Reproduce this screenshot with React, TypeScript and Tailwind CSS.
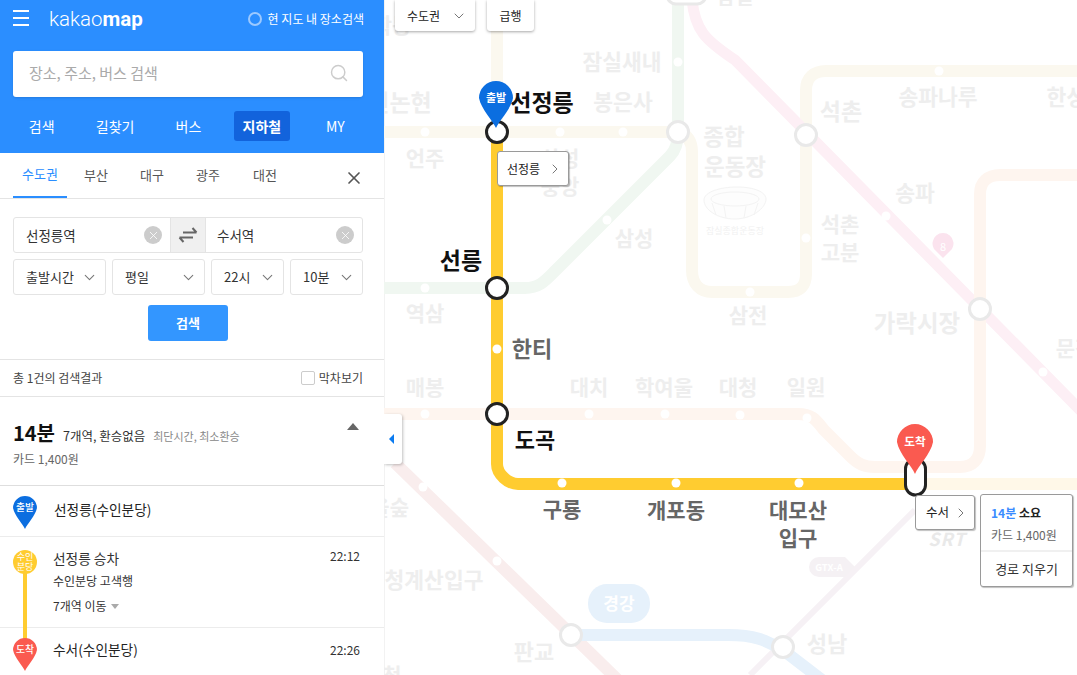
import React from "react";
import { ChevronDown, ChevronRight, Search, X } from "lucide-react";

const FONT = "'Noto Sans CJK KR', 'Noto Sans', sans-serif";

// faint station names: [text, x, y, size]
const fadedLabels: [string, number, number, number][] = [
  ["학동", 392, 33, 21],
  ["잠실새내", 622, 70, 21.5],
  ["신논현", 400, 111, 23],
  ["봉은사", 623, 110, 21.5],
  ["언주", 425, 166, 21],
  ["삼성", 560, 166, 21],
  ["중앙", 560, 194, 21],
  ["종합", 724, 145, 22.5],
  ["운동장", 735, 175, 22.5],
  ["삼성", 634, 246, 21],
  ["역삼", 425, 321, 21],
  ["석촌", 841, 120, 23],
  ["송파나루", 938, 105, 21.5],
  ["한성백제", 1086, 105, 21.5],
  ["송파", 915, 201, 21.5],
  ["석촌", 840, 232, 21],
  ["고분", 840, 260, 21],
  ["삼전", 748, 323, 21],
  ["가락시장", 917, 332, 23.5],
  ["문정", 1075, 356, 21],
  ["매봉", 425, 395, 21],
  ["대치", 589, 395, 21],
  ["학여울", 664, 395, 21],
  ["대청", 738, 395, 21],
  ["일원", 806, 395, 21],
  ["서울숲", 380, 515, 21],
  ["청계산입구", 434, 588, 21.5],
  ["판교", 534, 660, 22],
  ["성남", 827, 652, 22],
  ["청", 392, 683, 21],
];

// the route's own station names
const routeLabels: [string, number, number, number, string][] = [
  ["선정릉", 542, 111, 23, "#111111"],
  ["선릉", 461, 269, 23, "#111111"],
  ["한티", 532, 357, 22, "#666666"],
  ["도곡", 535, 448, 22, "#111111"],
  ["구룡", 562, 517, 21, "#666666"],
  ["개포동", 676, 518, 21, "#666666"],
  ["대모산", 798, 518, 21, "#666666"],
  ["입구", 798, 546, 21, "#666666"],
];

const fadedDots: [number, number][] = [
  [425, 132], [560, 132], [623, 132], [678, 62], [607, 220], [425, 288],
  [806, 238], [750, 292], [939, 71], [886, 216], [1043, 372], [425, 414],
  [589, 414], [665, 414], [740, 415], [807, 418], [423, 487], [497, 561],
];

const routeDots: [number, number][] = [[497, 349], [562, 483], [676, 483], [799, 483]];

const PIN_PATH = "M0 32 C-3 25 -15 13 -17 2 A17 17 0 1 1 17 2 C15 13 3 25 0 32Z";

const MapPin = ({ x, y, scale, fill, label }: { x: number; y: number; scale: number; fill: string; label: string }) => (
  <g transform={`translate(${x} ${y}) scale(${scale})`}>
    <path d={PIN_PATH} fill={fill} />
    <text y="6" textAnchor="middle" fontSize="11" fontWeight="700" fill="#fff">
      {label}
    </text>
  </g>
);

const SubwayMap = () => (
  <svg viewBox="384 0 693 675" className="w-[693px] h-[675px] block" style={{ fontFamily: FONT }}>
    <g fill="none" strokeWidth="12">
      <path d="M384 132H678M497 132V0M678 132C688 134 692 142 692 152V270C692 284 700 292 712 292H788C800 292 806 286 806 274V90C806 78 814 71 826 71H1077" stroke="#fbf8ef" />
      <path d="M384 288H525C540 288 546 280 556 270L670 156C676 150 678 142 678 132V0" stroke="#f0f7f1" />
      <path d="M692 0C695 30 705 40 735 60L1090 420" stroke="#fdeff5" strokeWidth="11" />
      <path d="M384 414H798C812 414 816 420 824 430L850 456C858 464 864 467 875 467H960C972 467 980 460 980 446V194C980 182 988 175 1000 175H1077" stroke="#fef5ef" />
      <path d="M915 484H1077" stroke="#fff8e8" />
      <path d="M915 510L750 675" stroke="#f6f1f5" strokeWidth="6" />
      <path d="M395 463L618 680" stroke="#f9eded" />
      <path d="M571 635H728C755 635 765 640 783 650L822 680" stroke="#e6f1fb" />
      <path d="M497 132V464C497 474 508 484 518 484H915" stroke="#ffcc30" />
    </g>

    {/* stadium */}
    <g fill="#fdfdfd" stroke="#f3f3f3" strokeWidth="1">
      <path d="M704 200C704 192 720 187 737 187C754 187 766 192 766 199C766 208 752 219 735 219C718 219 704 210 704 200Z" />
      <ellipse cx="735" cy="199" rx="24" ry="7" />
      <path fill="none" d="M712 203L716 215M724 206L726 218M746 206L744 218M758 203L754 215" />
    </g>
    <text x="735" y="234" textAnchor="middle" fontSize="9" fill="#f1f1f1">잠실종합운동장</text>

    {fadedDots.map(([x, y], i) => (
      <circle key={i} cx={x} cy={y} r="4.5" fill="#fff" />
    ))}
    {routeDots.map(([x, y], i) => (
      <circle key={i} cx={x} cy={y} r="4.5" fill="#fff" />
    ))}

    {[[678, 132], [806, 135], [980, 309], [571, 635], [783, 647]].map(([x, y], i) => (
      <circle key={i} cx={x} cy={y} r="10.5" fill="#fff" stroke="#e9e9e9" strokeWidth="3" />
    ))}
    <rect x="667" y="-18" width="39" height="22" rx="9" fill="#fff" stroke="#e9e9e9" strokeWidth="3" />

    {fadedLabels.map(([t, x, y, s], i) => (
      <text key={i} x={x} y={y} fontSize={s} fontWeight="700" textAnchor="middle" fill="#eeeeee">
        {t}
      </text>
    ))}
    <text x="735" y="4" fontSize="20" fontWeight="700" textAnchor="middle" fill="#eeeeee">잠실</text>

    {/* line tags */}
    <path d="M943 258L934 249A10.500 10.500 0 1 1 952 249Z" fill="#fbe3ee" />
    <text x="943" y="251" fontSize="11" textAnchor="middle" fill="#fff">8</text>
    <rect x="588" y="584" width="62" height="39" rx="19" fill="#e6f1fb" />
    <text x="619" y="610" fontSize="17" fontWeight="700" textAnchor="middle" fill="#fff">경강</text>
    <path d="M819 557H845L855 567L845 577H819A10 10 0 0 1 819 557Z" fill="#f5f1f4" />
    <text x="829" y="571" fontSize="9.5" fontWeight="700" textAnchor="middle" fill="#fff">GTX-A</text>
    <text x="947" y="546" fontSize="18" fontWeight="700" fontStyle="italic" textAnchor="middle" fill="#e9e9e9" letterSpacing="1">SRT</text>

    {routeLabels.map(([t, x, y, s, c], i) => (
      <text key={i} x={x} y={y} fontSize={s} fontWeight="700" textAnchor="middle" fill={c}>
        {t}
      </text>
    ))}

    {[[497, 132], [497, 288], [497, 414]].map(([x, y], i) => (
      <circle key={i} cx={x} cy={y} r="10.500" fill="#fff" stroke="#222" strokeWidth="3" />
    ))}
    <rect x="905.500" y="459" width="20" height="36" rx="10" fill="#fff" stroke="#222" strokeWidth="3" />

    <MapPin x={496} y={96} scale={1} fill="#0b6ee0" label="출발" />
    <MapPin x={915} y={440} scale={1.06} fill="#fa5a50" label="도착" />
  </svg>
);

const Select = ({ label, className }: { label: string; className: string }) => (
  <div className={`${className} h-9 flex items-center justify-between pl-3 pr-[7px] border border-[#e4e4e4] rounded-[3px] text-[13px] text-[#333]`}>
    <span>{label}</span>
    <ChevronDown size={17} strokeWidth={1.5} className="text-[#777]" />
  </div>
);

const ClearButton = () => (
  <span className="w-[18px] h-[18px] rounded-full bg-[#cccccc] flex items-center justify-center">
    <X size={13} strokeWidth={1.5} className="text-white" />
  </span>
);

const SmallPin = ({ fill, label }: { fill: string; label: string }) => (
  <svg viewBox="-17 -15 34 47" className="w-6 h-[33px] absolute left-[13px]">
    <path d={PIN_PATH} fill={fill} />
    <text y="6.500" textAnchor="middle" fontSize="14" fontWeight="500" fill="#fff">
      {label}
    </text>
  </svg>
);

const Sidebar = () => (
  <aside className="relative z-10 w-[384px] h-[675px] shrink-0 bg-white overflow-hidden">
    <header className="h-[153px] bg-[#2b8eff]">
      <div className="h-[51px] flex items-start pt-[5px] pl-[13px] pr-5 text-white">
        <div className="w-[16px] mt-[5px] flex flex-col gap-[5px]">
          <span className="h-0.5 bg-white" />
          <span className="h-0.5 bg-white" />
          <span className="h-0.5 bg-white" />
        </div>
        <div className="ml-5 text-[20.500px] leading-[28px] font-['Roboto']">
          <span className="font-light">kakao</span>
          <span className="font-bold">map</span>
        </div>
        <div className="ml-auto mt-[6px] flex items-center gap-[6px] text-xs">
          <span className="w-[14px] h-[14px] rounded-full border-2 border-[#9cc9ff]" />
          현 지도 내 장소검색
        </div>
      </div>
      <div className="ml-[13px] w-[350px] h-[46px] bg-white rounded-[3px] shadow-sm flex items-center justify-between pl-4 pr-[14px] pb-0.5 text-[15px] text-[#aaaaaa]">
        장소, 주소, 버스 검색
        <Search size={20} strokeWidth={1.75} className="text-[#cccccc]" />
      </div>
      <nav className="mt-[14px] pl-[5px] pr-[12px] grid grid-cols-5 text-white text-sm">
        <span className="h-[30px] flex items-center justify-center">검색</span>
        <span className="h-[30px] flex items-center justify-center">길찾기</span>
        <span className="h-[30px] flex items-center justify-center">버스</span>
        <span className="h-[30px] flex items-center justify-center">
          <b className="w-14 h-[30px] flex items-center justify-center rounded-[3px] bg-[#1263dc] font-bold">지하철</b>
        </span>
        <span className="h-[30px] flex items-center justify-center">MY</span>
      </nav>
    </header>

    <div className="h-[46px] relative flex border-b border-[#e4e4e4] pl-[13px] text-[13px] text-[#555]">
      <span className="w-[54px] h-[45px] flex items-center justify-center pb-0.5 text-[#2b8eff] border-b-2 border-[#2b8eff]">수도권</span>
      <span className="ml-[13px] h-[43px] w-8 flex items-center justify-center">부산</span>
      <span className="ml-6 h-[43px] w-8 flex items-center justify-center">대구</span>
      <span className="ml-6 h-[43px] w-8 flex items-center justify-center">광주</span>
      <span className="ml-[25px] h-[43px] w-8 flex items-center justify-center">대전</span>
      <X size={20} strokeWidth={2} className="absolute left-[344px] top-[15px] text-[#555]" />
    </div>

    <div className="w-[350px] ml-[13px] pt-[18px]">
      <div className="h-9 flex border border-[#e4e4e4] rounded-[3px] text-[13.5px] text-[#333]">
        <div className="w-[156px] flex items-center justify-between pl-3 pr-2">
          선정릉역
          <ClearButton />
        </div>
        <div className="w-9 bg-[#f0f0f0] border-x border-[#e4e4e4] flex items-center justify-center">
          <svg viewBox="0 0 20 16" className="w-5 h-4" fill="none" stroke="#666" strokeWidth="2">
            <path d="M5 5.500H18.500M14.500 1L18.500 5.500M15 10.500H1.500M5.500 15L1.500 10.500" />
          </svg>
        </div>
        <div className="flex-1 flex items-center justify-between pl-[11px] pr-2">
          수서역
          <ClearButton />
        </div>
      </div>
      <div className="mt-[6px] flex gap-[6px]">
        <Select label="출발시간" className="w-[93px]" />
        <Select label="평일" className="w-[93px]" />
        <Select label="22시" className="w-[73px]" />
        <Select label="10분" className="w-[73px]" />
      </div>
      <div className="mt-[10px] mx-auto w-20 h-9 rounded-[3px] bg-[#3396ff] flex items-center justify-center text-[13px] font-bold text-white">검색</div>
    </div>

    <div className="mt-[18px] h-[38px] border-y border-[#e4e4e4] flex items-center justify-between pl-[13px] pr-[21px] text-xs text-[#444]">
      총 1건의 검색결과
      <label className="flex items-center gap-1">
        <span className="w-[14px] h-[14px] border border-[#cccccc] rounded-[2px]" />
        막차보기
      </label>
    </div>

    <div className="h-[89px] relative border-b border-[#dedede] px-[13px] pt-[23px]">
      <div className="flex items-baseline h-[26px]">
        <b className="text-xl leading-[26px] font-bold text-[#111]">14분</b>
        <span className="ml-2 text-[12.500px] text-[#333]">7개역, 환승없음</span>
        <span className="ml-2 text-[11px] text-[#888]">최단시간, 최소환승</span>
      </div>
      <div className="mt-[5px] text-xs text-[#666]">카드 1,400원</div>
      <span className="absolute left-[347px] top-[26px] w-0 h-0 border-x-[6px] border-x-transparent border-b-[7px] border-b-[#666]" />
    </div>

    <div className="relative h-[51px] border-b border-[#ececec] flex items-center pb-1 pl-[54px] text-[13.700px] text-[#222]">
      <div className="absolute left-0 top-[10px]"><SmallPin fill="#0b6ee0" label="출발" /></div>
      선정릉(수인분당)
    </div>

    <div className="relative h-[91px] border-b border-[#ececec] pl-[53px] pr-6 pt-[11px] text-[#333]">
      <span className="absolute left-[23px] top-[36px] w-1 h-[72px] bg-[#ffcc30] z-10" />
      <span className="absolute left-[13px] top-[13px] w-6 h-6 rounded-full bg-[#ffcc30] text-white text-[9px] leading-[10px] flex items-center justify-center text-center z-10">
        수인
        <br />
        분당
      </span>
      <div className="flex justify-between text-[13.700px] leading-5">
        <span>선정릉 승차</span>
        <span className="text-xs">22:12</span>
      </div>
      <div className="mt-[3px] text-xs leading-5">수인분당 고색행</div>
      <div className="mt-[5px] text-xs leading-5 flex items-center gap-1">
        7개역 이동
        <span className="w-0 h-0 border-x-4 border-x-transparent border-t-[5px] border-t-[#aaaaaa]" />
      </div>
    </div>

    <div className="relative h-[47px] flex items-center justify-between pl-[53px] pr-6 pb-1 text-[13.700px] text-[#222]">
      <div className="absolute left-0 top-[10px] z-20"><SmallPin fill="#fa5a50" label="도착" /></div>
      수서(수인분당)
      <span className="text-xs text-[#333]">22:26</span>
    </div>
  </aside>
);

const App = () => (
  <div className="relative w-[1077px] h-[675px] flex overflow-hidden bg-white" style={{ fontFamily: FONT }}>
    <Sidebar />
    <main className="relative flex-1 h-full border-l border-[#f2f2f2]">
      <div className="absolute -left-px top-0">
        <SubwayMap />
      </div>

      {/* map controls */}
      <div className="absolute left-[10px] top-0 flex gap-3 text-xs text-[#222]">
        <div className="w-20 h-[31px] pl-[12px] pr-2 bg-white rounded-b-[3px] shadow-[0_1px_3px_rgba(0,0,0,0.35)] flex items-center justify-between">
          수도권
          <ChevronDown size={16} strokeWidth={1.5} className="text-[#777]" />
        </div>
        <div className="w-[47px] h-[31px] bg-white rounded-b-[3px] shadow-[0_1px_3px_rgba(0,0,0,0.35)] flex items-center justify-center">급행</div>
      </div>

      {/* collapse handle */}
      <div className="absolute -left-px top-[414px] w-[18px] h-[50px] bg-white rounded-r-[3px] shadow-[1px_1px_3px_rgba(0,0,0,0.25)] flex items-center pl-[5px]">
        <span className="w-0 h-0 border-y-[5px] border-y-transparent border-r-[5px] border-r-[#0b7bf0]" />
      </div>

      {/* station callouts */}
      <div className="absolute left-[112px] top-[151px] w-[72px] h-[35px] bg-white border border-[#9a9a9a] rounded-[3px] shadow-[1px_1px_1px_rgba(0,0,0,0.25)] flex items-center justify-between pl-[9px] pr-[5px] text-xs text-[#222]">
        선정릉
        <ChevronRight size={16} strokeWidth={1.5} className="text-[#777]" />
      </div>
      <div className="absolute left-[530px] top-[495px] w-[60px] h-[35px] bg-white border border-[#9a9a9a] rounded-[3px] shadow-[1px_1px_1px_rgba(0,0,0,0.25)] flex items-center justify-between pl-[10px] pr-[5px] text-[12.500px] text-[#222]">
        수서
        <ChevronRight size={16} strokeWidth={1.5} className="text-[#777]" />
      </div>
      <div className="absolute left-[595px] top-[494px] w-[93px] h-[93px] bg-white border border-[#9a9a9a] rounded-[3px] shadow-[1px_1px_1px_rgba(0,0,0,0.25)] text-[#333]">
        <div className="h-[57px] border-b-2 border-[#f0f0f0] pl-[10px] pt-[9px]">
          <div className="text-xs leading-[18px] font-bold text-[#222]">
            <span className="text-[#3b8cff]">14분</span> 소요
          </div>
          <div className="mt-1 text-xs leading-[18px] text-[#666]">카드 1,400원</div>
        </div>
        <div className="h-[34px] flex items-center justify-center text-[13px]">경로 지우기</div>
      </div>
    </main>
  </div>
);

export default App;
